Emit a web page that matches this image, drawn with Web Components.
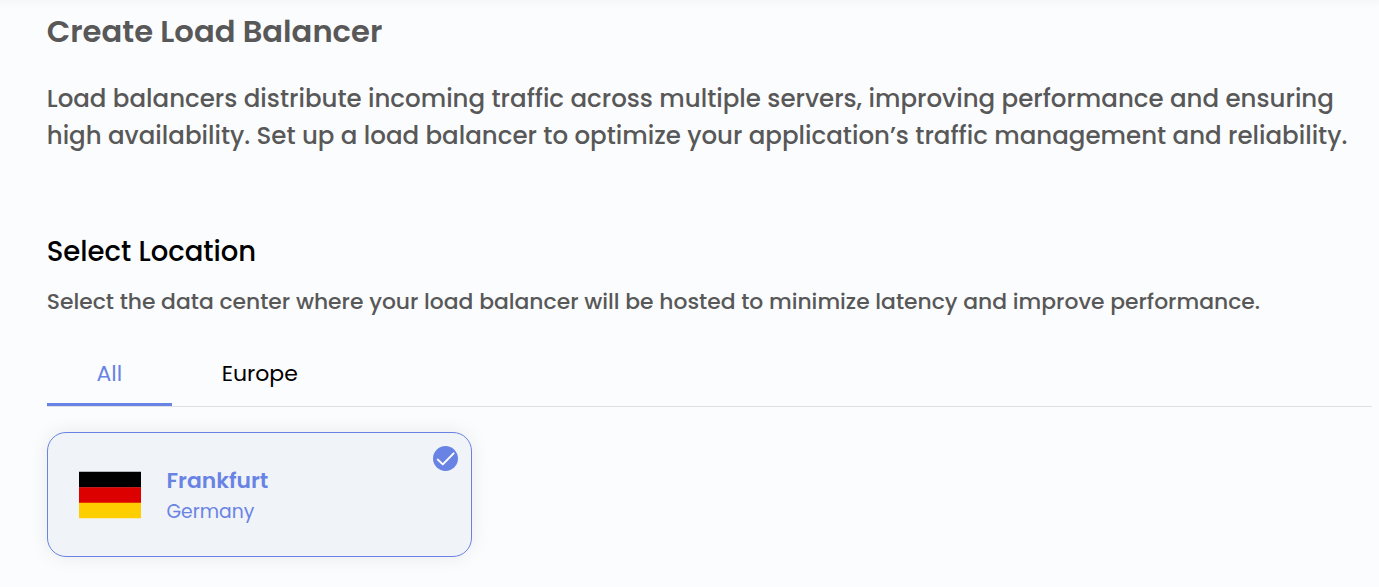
<!DOCTYPE html>
<html lang="en">
<head>
<meta charset="utf-8">
<title>Create Load Balancer</title>
<style>
body{margin:0;background:#fbfcfe;font-family:Poppins,Inter,"Open Sans",sans-serif;overflow:hidden}
</style>
</head>
<body>
<load-balancer-page>
  <page-intro slot="intro">
    <span slot="title">Create Load Balancer</span>
    <span slot="line1">Load balancers distribute incoming traffic across multiple servers, improving performance and ensuring</span>
    <span slot="line2">high availability. Set up a load balancer to optimize your application’s traffic management and reliability.</span>
  </page-intro>
  <section-heading>
    <span slot="title">Select Location</span>
    <span slot="hint">Select the data center where your load balancer will be hosted to minimize latency and improve performance.</span>
  </section-heading>
  <tab-bar>
    <tab-item active>All</tab-item>
    <tab-item>Europe</tab-item>
  </tab-bar>
  <location-card>
    <flag-germany slot="flag"></flag-germany>
    <span slot="city">Frankfurt</span>
    <span slot="country">Germany</span>
  </location-card>
</load-balancer-page>
<script>
function define(name, html) {
  customElements.define(name, class extends HTMLElement {
    constructor() {
      super();
      this.attachShadow({ mode: 'open' }).innerHTML = html;
    }
  });
}

define('load-balancer-page', `
<style>
:host{display:block;box-sizing:border-box;height:587px;padding:9px 7px 0 46.75px;
 background:linear-gradient(#f6f7f9 0,#f8f9fb 3px,#fafbfd 6px,#fbfcfe 10px)}
</style>
<slot name="intro"></slot><slot></slot>`);

define('page-intro', `
<style>
:host{display:block;color:#585858;white-space:nowrap}
h1{margin:0;font-size:30.625px;line-height:46px;font-weight:600}
p{margin:25px 0 0;font-size:24.5px;line-height:37px;font-weight:500}
p span{display:block;width:max-content}
</style>
<h1><slot name="title"></slot></h1>
<p><span class="a"><slot name="line1"></slot></span><span class="b"><slot name="line2"></slot></span></p>`);

define('section-heading', `
<style>
:host{display:block;margin-top:78px;white-space:nowrap}
h2{margin:0;font-size:27.5px;line-height:40px;font-weight:500;color:#000}
p{margin:14px 0 0;font-size:21.875px;line-height:32px;font-weight:500;color:#585858}
</style>
<h2><slot name="title"></slot></h2>
<p><slot name="hint"></slot></p>`);

define('tab-bar', `
<style>
:host{display:flex;margin-top:23px;height:65px;border-bottom:1px solid #e0e1e3}
</style>
<slot></slot>`);

define('tab-item', `
<style>
:host{display:block;box-sizing:border-box;width:125px;height:65px;padding-top:16px;text-align:center;
 font-size:22px;line-height:33px;color:#000;white-space:nowrap}
:host(:not([active])){width:176px}
:host([active]){color:#6983e4;border-bottom:3px solid #6983e4}
</style>
<slot></slot>`);

define('location-card', `
<style>
:host{display:flex;align-items:center;position:relative;box-sizing:border-box;width:425px;height:125px;margin-top:25px;
 padding-left:31.25px;gap:25.5px;border:1px solid #6983e4;border-radius:19px;background:#f0f4f9;
 box-shadow:0 0 19px rgba(0,0,0,.08);color:#6983e4;white-space:nowrap}
.text{padding-top:2px}
.city{font-size:21.875px;line-height:32px;font-weight:600}
.country{font-size:18.75px;line-height:30px}
svg{position:absolute;right:13px;top:13px}
</style>
<slot name="flag"></slot>
<div class="text"><div class="city"><slot name="city"></slot></div><div class="country"><slot name="country"></slot></div></div>
<svg width="25" height="25" viewBox="0 0 25 25"><circle cx="12.5" cy="12.5" r="12.5" fill="#6983e4"/><path d="M4.8 13.6L9.8 18.4L20.6 7.4" fill="none" stroke="#fff" stroke-width="2" stroke-linecap="round" stroke-linejoin="round"/></svg>`);

define('flag-germany', `
<style>:host{display:block;width:62px;height:47px}svg{display:block;overflow:visible}</style>
<svg width="62" height="47" viewBox="0 0 62 47"><path fill="#ffce00" d="M0 31h62v16.3H0z"/><path fill="#000" d="M0 .7h62v15.7H0z"/><path fill="#d00" d="M0 16.2h62v15.5H0z"/></svg>`);
</script>
</body>
</html>
